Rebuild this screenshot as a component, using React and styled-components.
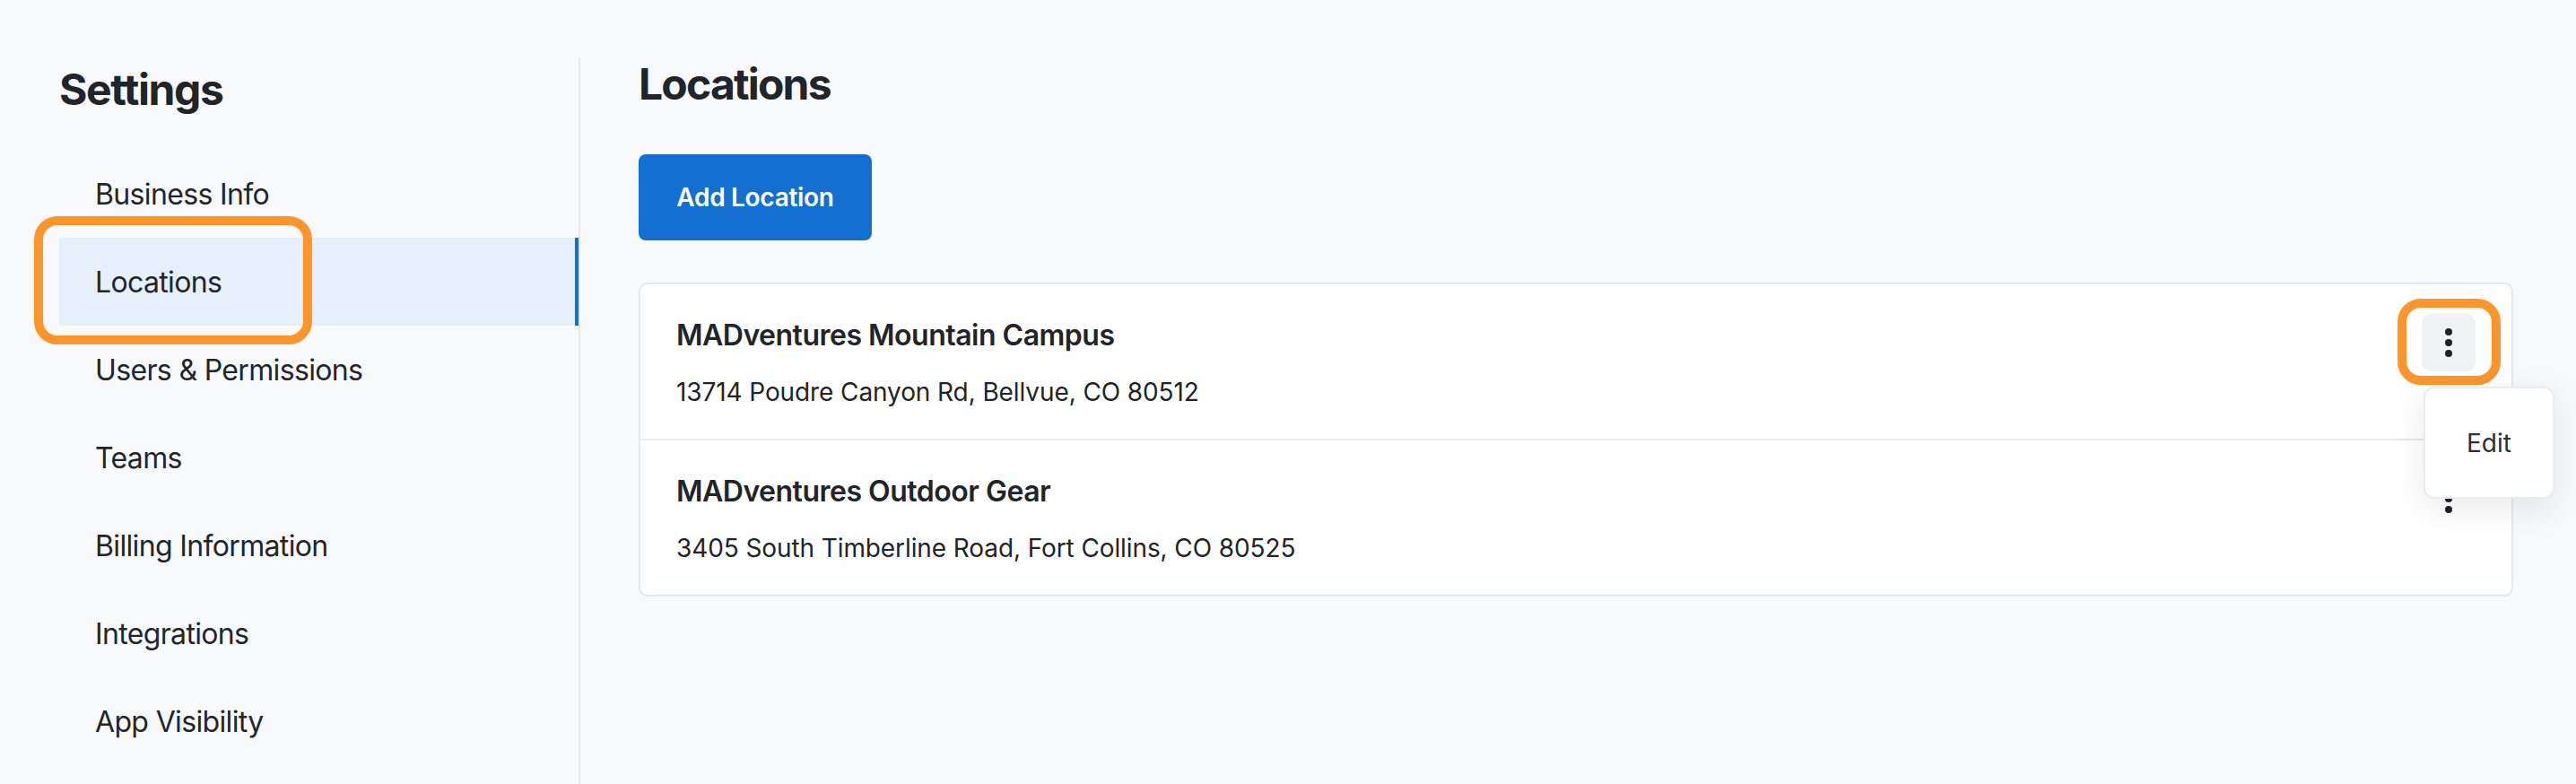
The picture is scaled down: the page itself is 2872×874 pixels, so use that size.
import React from "react";
import styled, { createGlobalStyle } from "styled-components";

const GlobalStyle = createGlobalStyle`
  html, body { margin: 0; padding: 0; }
  body {
    background: #f8f9fb;
    font-family: Inter, "Noto Sans", "Liberation Sans", sans-serif;
    color: #212529;
  }
  * { box-sizing: border-box; }
`;

const Page = styled.div`
  display: flex;
  min-height: 874px;
  padding-top: 64px;
`;

const Sidebar = styled.aside`
  flex: 0 0 647px;
  padding-left: 66px;
  border-right: 2px solid #e7e8ea;
`;

const SidebarTitle = styled.h1`
  margin: 7px 0 38px;
  font-size: 48px;
  line-height: 58px;
  font-weight: 700;
  letter-spacing: -1.4px;
`;

const Nav = styled.nav`
  display: flex;
  flex-direction: column;
`;

const NavItem = styled.div`
  position: relative;
  height: 98px;
  display: flex;
  align-items: center;
  padding-left: 40px;
  font-size: 32px;
  color: #22262b;
  letter-spacing: -0.65px;
  background: ${(p) => (p.$active ? "#e6f0fa" : "transparent")};
  border-right: 4px solid ${(p) => (p.$active ? "#1270d0" : "transparent")};
`;

const Annotation = styled.div`
  position: absolute;
  border: 10px solid #fd952a;
  border-radius: 26px;
  pointer-events: none;
  left: ${(p) => p.$left}px;
  top: ${(p) => p.$top}px;
  width: ${(p) => p.$width}px;
  height: ${(p) => p.$height}px;
`;

const Main = styled.main`
  flex: 1;
  padding: 0 70px 0 65px;
`;

const PageTitle = styled.h2`
  margin: 1px 0 49px;
  font-size: 48px;
  line-height: 58px;
  font-weight: 700;
  letter-spacing: -1.8px;
`;

const PrimaryButton = styled.button`
  display: block;
  height: 96px;
  width: 260px;
  padding: 0;
  border: none;
  border-radius: 8px;
  background: #1271d0;
  color: #ffffff;
  font-family: inherit;
  font-size: 28px;
  font-weight: 600;
  letter-spacing: -0.3px;
  margin-bottom: 47px;
`;

const Card = styled.div`
  background: #ffffff;
  border: 2px solid #e6e7e9;
  border-radius: 10px;
`;

const Row = styled.div`
  display: flex;
  justify-content: space-between;
  align-items: flex-start;
  padding: 33px 40px 31px;
  border-bottom: ${(p) => (p.$last ? "none" : "2px solid #e8e9eb")};
`;

const RowText = styled.div`
  display: flex;
  flex-direction: column;
`;

const RowName = styled.div`
  font-size: 32px;
  line-height: 48px;
  font-weight: 600;
  color: #212529;
  letter-spacing: -0.5px;
`;

const RowAddress = styled.div`
  margin-top: 18px;
  font-size: 28px;
  line-height: 42px;
  color: #212529;
  letter-spacing: -0.1px;
`;

const KebabWrap = styled.div`
  position: relative;
`;

const KebabButton = styled.button`
  width: 60px;
  height: 64px;
  border: none;
  border-radius: 10px;
  background: ${(p) => (p.$active ? "#f1f2f3" : "transparent")};
  display: flex;
  flex-direction: column;
  align-items: center;
  justify-content: center;
  gap: 4px;
  padding: 0;
`;

const Dot = styled.span`
  width: 8px;
  height: 8px;
  border-radius: 50%;
  background: #1f242b;
`;

const Menu = styled.div`
  position: absolute;
  left: 2px;
  top: 81px;
  width: 146px;
  height: 125px;
  background: #ffffff;
  border: 2px solid #ebecee;
  border-radius: 12px;
  box-shadow: 0 10px 40px rgba(0, 0, 0, 0.09);
  display: flex;
  align-items: center;
  justify-content: center;
  z-index: 5;
`;

const MenuItem = styled.div`
  font-size: 28px;
  color: #2a2f36;
`;

const navItems = [
  "Business Info",
  "Locations",
  "Users & Permissions",
  "Teams",
  "Billing Information",
  "Integrations",
  "App Visibility",
];

const locations = [
  {
    name: "MADventures Mountain Campus",
    address: "13714 Poudre Canyon Rd, Bellvue, CO 80512",
    open: true,
  },
  {
    name: "MADventures Outdoor Gear",
    address: "3405 South Timberline Road, Fort Collins, CO 80525",
    open: false,
  },
];

function Kebab({ open }) {
  return (
    <KebabWrap>
      <KebabButton $active={open} aria-label="More actions">
        <Dot />
        <Dot />
        <Dot />
      </KebabButton>
      {open && (
        <>
          <Annotation $left={-27} $top={-17} $width={115} $height={96} />
          <Menu>
            <MenuItem>Edit</MenuItem>
          </Menu>
        </>
      )}
    </KebabWrap>
  );
}

export default function App() {
  return (
    <>
      <GlobalStyle />
      <Page>
        <Sidebar>
          <SidebarTitle>Settings</SidebarTitle>
          <Nav>
            {navItems.map((item) => (
              <NavItem key={item} $active={item === "Locations"}>
                {item}
                {item === "Locations" && (
                  <Annotation $left={-28} $top={-24} $width={310} $height={143} />
                )}
              </NavItem>
            ))}
          </Nav>
        </Sidebar>
        <Main>
          <PageTitle>Locations</PageTitle>
          <PrimaryButton>Add Location</PrimaryButton>
          <Card>
            {locations.map((loc, i) => (
              <Row key={loc.name} $last={i === locations.length - 1}>
                <RowText>
                  <RowName>{loc.name}</RowName>
                  <RowAddress>{loc.address}</RowAddress>
                </RowText>
                <Kebab open={loc.open} />
              </Row>
            ))}
          </Card>
        </Main>
      </Page>
    </>
  );
}
